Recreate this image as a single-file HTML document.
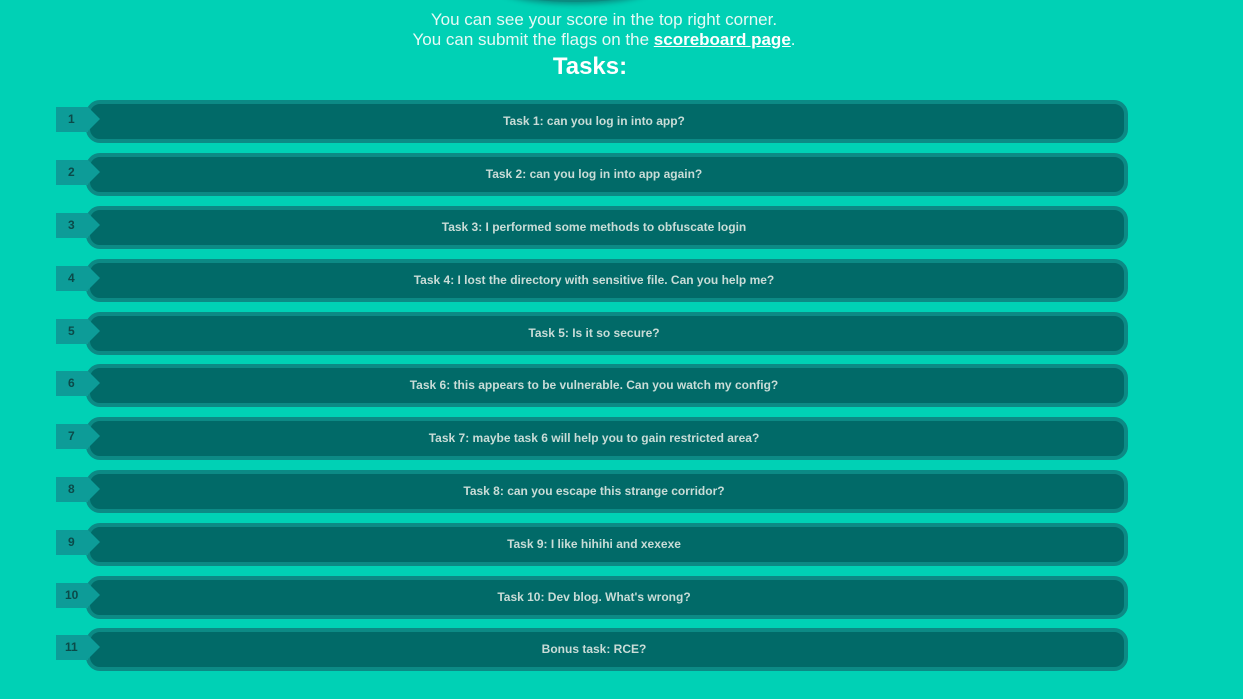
<!DOCTYPE html>
<html><head><meta charset="utf-8"><style>
body{margin:0;width:1243px;height:699px;background:#00d1b5;font-family:"Liberation Sans",sans-serif;overflow:hidden;position:relative}
.blob{position:absolute;left:495px;top:-34px;width:160px;height:36px;border-radius:50%;background:#0a8a80;box-shadow:0 2px 6px #0a8a80}
.intro{position:absolute;top:10px;left:0;width:1208px;text-align:center;color:#e6faf6;font-size:17px;line-height:20px}
.intro a{color:#fff;font-weight:bold;text-decoration:underline}
h2{position:absolute;top:53px;left:0;width:1180px;text-align:center;color:#fff;font-size:24px;margin:0;font-weight:bold}
.row{position:absolute;left:56px;height:43px}
.bar{position:absolute;left:30px;width:1008px;padding-right:26px;height:35px;top:0;border:4px solid #0c8a85;border-radius:14px;background:#016a68;color:#c9dcd7;font-size:12px;font-weight:bold;text-align:center;line-height:35px}
.num{position:absolute;left:0;top:7px;width:32px;height:25px;background:#0d9c98;color:#0b4a49;font-size:12px;font-weight:bold;line-height:25px;padding-left:12px;box-sizing:border-box}
.num:after{content:"";position:absolute;right:-12px;top:0;border-left:12px solid #0d9c98;border-top:12.5px solid transparent;border-bottom:12.5px solid transparent}
</style></head><body>
<div class="blob"></div>
<div class="intro">You can see your score in the top right corner.<br>You can submit the flags on the <a>scoreboard page</a>.</div>
<h2>Tasks:</h2>
<div class="row" style="top:100px"><div class="bar">Task 1: can you log in into app?</div><div class="num">1</div></div>
<div class="row" style="top:153px"><div class="bar">Task 2: can you log in into app again?</div><div class="num">2</div></div>
<div class="row" style="top:206px"><div class="bar">Task 3: I performed some methods to obfuscate login</div><div class="num">3</div></div>
<div class="row" style="top:259px"><div class="bar">Task 4: I lost the directory with sensitive file. Can you help me?</div><div class="num">4</div></div>
<div class="row" style="top:312px"><div class="bar">Task 5: Is it so secure?</div><div class="num">5</div></div>
<div class="row" style="top:364px"><div class="bar">Task 6: this appears to be vulnerable. Can you watch my config?</div><div class="num">6</div></div>
<div class="row" style="top:417px"><div class="bar">Task 7: maybe task 6 will help you to gain restricted area?</div><div class="num">7</div></div>
<div class="row" style="top:470px"><div class="bar">Task 8: can you escape this strange corridor?</div><div class="num">8</div></div>
<div class="row" style="top:523px"><div class="bar">Task 9: I like hihihi and xexexe</div><div class="num">9</div></div>
<div class="row" style="top:576px"><div class="bar">Task 10: Dev blog. What's wrong?</div><div class="num" style="padding-left:9px">10</div></div>
<div class="row" style="top:628px"><div class="bar">Bonus task: RCE?</div><div class="num" style="padding-left:9px">11</div></div>
</body></html>
